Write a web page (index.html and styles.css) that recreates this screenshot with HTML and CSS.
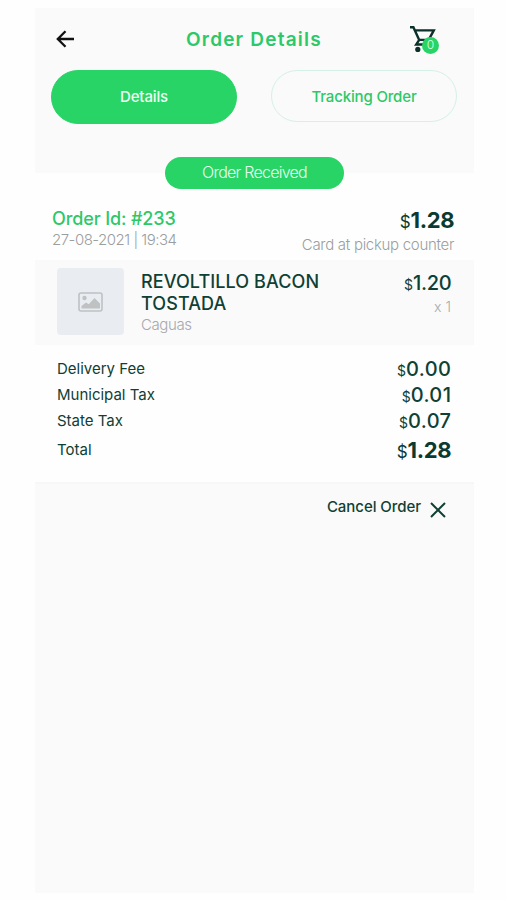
FILE: index.html
```html
<!DOCTYPE html>
<html lang="en">
<head>
<meta charset="utf-8">
<title>Order Details</title>
<link rel="stylesheet" href="styles.css">
</head>
<body>
<main class="screen">
  <header class="header">
    <div class="topbar">
      <svg class="back" viewBox="0 0 20 20"><path d="M18 10H2.5M9.5 2.3L1.8 10l7.7 7.7"/></svg>
      <h1 class="title">Order Details</h1>
      <div class="cart">
        <svg class="cart-icon" viewBox="0 0 28 28"><path d="M1 2.2h3.4l5.8 12.7M6.2 5.4h18.6l-5.1 9.5h-9.5l-3 4.6h14.5"/><circle cx="8.8" cy="24.4" r="2.6"/></svg>
        <span class="badge">0</span>
      </div>
    </div>
    <nav class="tabs">
      <a class="tab active">Details</a>
      <a class="tab">Tracking Order</a>
    </nav>
  </header>
  <section class="summary">
    <div class="status">Order Received</div>
    <div class="order">
      <div>
        <div class="order-id">Order Id: #233</div>
        <div class="date">27-08-2021 | 19:34</div>
      </div>
      <div class="right">
        <div class="price big"><small>$</small>1.28</div>
        <div class="payment">Card at pickup counter</div>
      </div>
    </div>
  </section>
  <section class="item">
    <div class="thumb">
      <svg viewBox="0 0 25 20"><rect x="1" y="1" width="23" height="18" rx="2"/><circle cx="6.5" cy="6" r="2.2"/><path d="M3.5 16.5v-2.5l4.5-3.5 2.7 1.7 5.8-6.2 5.5 5.5v5z"/></svg>
    </div>
    <div class="item-info">
      <div class="name">REVOLTILLO BACON<br>TOSTADA</div>
      <div class="place">Caguas</div>
    </div>
    <div class="item-price right">
      <div class="price"><small>$</small>1.20</div>
      <div class="qty">x 1</div>
    </div>
  </section>
  <section class="totals">
    <div class="row"><span>Delivery Fee</span><span class="price"><small>$</small>0.00</span></div>
    <div class="row"><span>Municipal Tax</span><span class="price"><small>$</small>0.01</span></div>
    <div class="row"><span>State Tax</span><span class="price"><small>$</small>0.07</span></div>
    <div class="row total"><span>Total</span><span class="price big"><small>$</small>1.28</span></div>
  </section>
  <footer class="footer">
    <span class="cancel">Cancel Order</span>
    <svg viewBox="0 0 16 16"><path d="M1 1l14 14M15 1L1 15"/></svg>
  </footer>
</main>
</body>
</html>
```
FILE: styles.css
```css
* { box-sizing: border-box; }
body { margin: 0; background: #fefefe; color: #0f4034; font-family: Inter, "Liberation Sans", sans-serif; font-size: 15px; }
.screen { width: 439px; height: 885px; margin: 8px 0 0 35px; display: flex; flex-direction: column; }
.header { height: 165px; background: #fafafa; padding: 14px 17px 0 16px; }
.topbar { height: 48px; display: flex; align-items: flex-start; }
.back { width: 20px; height: 20px; margin: 7px 0 0 5px; fill: none; stroke: #111; stroke-width: 2.3; }
.title { margin: 0; flex: 1; padding-left: 110px; font-size: 19px; line-height: 36px; font-weight: 600; letter-spacing: 1.2px; color: #2dc868; white-space: nowrap; }
.cart { position: relative; width: 30px; height: 32px; margin: 3px 18px 0 0; }
.cart-icon { width: 28px; height: 28px; fill: none; stroke: #0b302a; stroke-width: 2.4; }
.cart-icon circle { fill: #0b302a; stroke: none; }
.badge { position: absolute; left: 13px; top: 12px; width: 17px; height: 17px; border-radius: 50%; background: #28d466; color: #d8ffe5; font-size: 12px; font-weight: 300; line-height: 15px; text-align: center; }
.tabs { display: flex; justify-content: space-between; }
.tab { width: 186px; height: 52px; border: 1px solid #d4f1e6; border-radius: 27px; color: #2dc868; font-size: 15px; line-height: 51px; font-weight: 500; letter-spacing: -.15px; text-align: center; }
.tab.active { height: 54px; background: #28d466; border-color: #28d466; color: #effff4; }
.summary { height: 87px; padding: 0 20px 0 17px; }
.status { width: 179px; height: 32px; margin: -16px auto 0 113px; border-radius: 16px; background: #28d466; color: #e5ffed; font-size: 16px; line-height: 31px; font-weight: 300; letter-spacing: -.75px; text-align: center; }
.order { display: flex; justify-content: space-between; padding-top: 18px; }
.right { text-align: right; }
.order-id { color: #2dc868; font-size: 18px; line-height: 24px; font-weight: 500; letter-spacing: -.12px; }
.date { color: #9a9ea1; font-size: 15px; line-height: 17px; font-weight: 300; letter-spacing: -.5px; }
.price { font-size: 20px; line-height: 26px; font-weight: 500; letter-spacing: .4px; white-space: nowrap; margin-right: -.4px; }
.item-price .price { letter-spacing: -.3px; }
.price small { font-size: 14px; font-weight: 400; letter-spacing: 0; }
.price.big { font-size: 22px; font-weight: 700; letter-spacing: -.3px; color: #0b3a30; }
.price.big small { font-size: 17px; font-weight: 400; }
.payment { color: #9a9ea1; font-size: 15px; line-height: 20px; font-weight: 300; letter-spacing: -.3px; }
.item { height: 85px; background: #fafafa; display: flex; padding: 8px 23px 0 22px; }
.thumb { width: 67px; height: 67px; border-radius: 4px; background: #e9edf1; display: grid; place-items: center; }
.thumb svg { width: 25px; height: 20px; fill: #bfc1c3; }
.thumb rect { fill: none; stroke: #bfc1c3; stroke-width: 1.6; }
.item-info { flex: 1; padding: 3px 0 0 17px; white-space: nowrap; }
.name { font-size: 18px; line-height: 22px; font-weight: 500; letter-spacing: .1px; }
.place { color: #a6a8ae; font-size: 15px; line-height: 19px; font-weight: 300; letter-spacing: -.4px; }
.item-price { padding-top: 2px; }
.qty { color: #a8aaab; font-size: 14px; line-height: 18px; font-weight: 300; }
.totals { height: 137px; padding: 11px 23px 0 22px; }
.row { height: 26px; display: flex; justify-content: space-between; line-height: 26px; font-size: 15px; letter-spacing: 0; }
.row.total { margin-top: 3px; }
.footer { flex: 1; background: #fafafa; border-top: 2px solid #f7f7f7; display: flex; align-items: flex-start; justify-content: flex-end; padding: 13px 28px 0 0; }
.cancel { font-size: 15px; line-height: 20px; font-weight: 500; letter-spacing: -.05px; }
.footer svg { width: 16px; height: 16px; margin: 5px 0 0 9px; fill: none; stroke: #0f4034; stroke-width: 2; }
```
